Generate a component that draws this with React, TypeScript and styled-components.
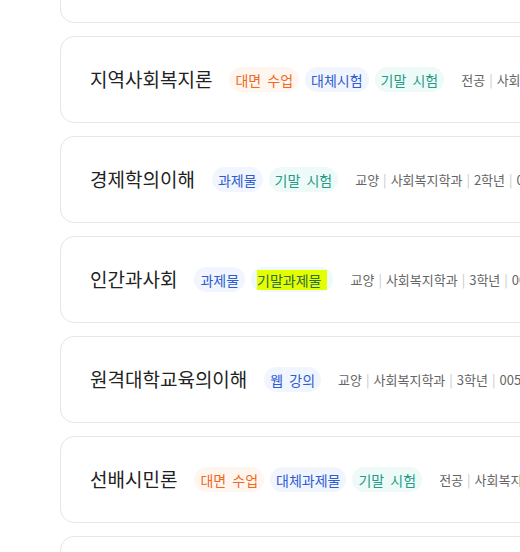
import React from 'react';
import styled, { createGlobalStyle } from 'styled-components';

type TagKind = 'orange' | 'blue' | 'teal';

interface Course {
  title: string;
  tags: { label: string; kind: TagKind; marked?: boolean }[];
  meta: string[];
}

const courses: Course[] = [
  {
    title: '사회복지개론',
    tags: [{ label: '과제물', kind: 'blue' }],
    meta: ['전공', '사회복지학과', '1학년', '003'],
  },
  {
    title: '지역사회복지론',
    tags: [
      { label: '대면 수업', kind: 'orange' },
      { label: '대체시험', kind: 'blue' },
      { label: '기말 시험', kind: 'teal' },
    ],
    meta: ['전공', '사회복지학과', '3학년', '003'],
  },
  {
    title: '경제학의이해',
    tags: [
      { label: '과제물', kind: 'blue' },
      { label: '기말 시험', kind: 'teal' },
    ],
    meta: ['교양', '사회복지학과', '2학년', '003'],
  },
  {
    title: '인간과사회',
    tags: [
      { label: '과제물', kind: 'blue' },
      { label: '기말과제물', kind: 'teal', marked: true },
    ],
    meta: ['교양', '사회복지학과', '3학년', '003'],
  },
  {
    title: '원격대학교육의이해',
    tags: [{ label: '웹 강의', kind: 'blue' }],
    meta: ['교양', '사회복지학과', '3학년', '005'],
  },
  {
    title: '선배시민론',
    tags: [
      { label: '대면 수업', kind: 'orange' },
      { label: '대체과제물', kind: 'blue' },
      { label: '기말 시험', kind: 'teal' },
    ],
    meta: ['전공', '사회복지학과', '4학년', '003'],
  },
  {
    title: '사회복지행정론',
    tags: [{ label: '과제물', kind: 'blue' }],
    meta: ['전공', '사회복지학과', '4학년', '003'],
  },
];

const tagColors: Record<TagKind, { fg: string; bg: string }> = {
  orange: { fg: '#f0691e', bg: '#fff6f0' },
  blue: { fg: '#2f5bd3', bg: '#f1f6fe' },
  teal: { fg: '#249a87', bg: '#eefaf8' },
};

const App: React.FC = () => {
  return (
    <>
      <GlobalStyle />
      <List>
        {courses.map((c) => (
          <Card key={c.title}>
            <Title>{c.title}</Title>
            <Tags>
              {c.tags.map((t) => (
                <Tag key={t.label} $kind={t.kind}>
                  {t.marked ? <Mark>{t.label}</Mark> : t.label}
                </Tag>
              ))}
            </Tags>
            <Meta>
              {c.meta.map((m, i) => (
                <React.Fragment key={m + i}>
                  {i > 0 && <Sep>|</Sep>}
                  {m}
                </React.Fragment>
              ))}
              <Sep>|</Sep>3학점
            </Meta>
          </Card>
        ))}
      </List>
    </>
  );
};

const GlobalStyle = createGlobalStyle`
  html, body {
    margin: 0;
    background: #fff;
    overflow: hidden;
  }
  body {
    font-family: "Noto Sans CJK KR", "Noto Sans", sans-serif;
  }
`;

const List = styled.div`
  display: flex;
  flex-direction: column;
  gap: 13px;
  margin-top: -64px;
  padding-left: 60px;
`;

const Card = styled.div`
  box-sizing: border-box;
  height: 87px;
  width: 760px;
  flex-shrink: 0;
  display: flex;
  align-items: center;
  padding-left: 29px;
  border: 1px solid #e6e6e6;
  border-radius: 14px;
  background: #fff;
  white-space: nowrap;
`;

const Title = styled.div`
  font-size: 19px;
  color: #222;
  margin-right: 17px;
  margin-top: -2px;
`;

const Tags = styled.div`
  display: flex;
  gap: 6px;
  margin-right: 17px;
`;

const Tag = styled.span<{ $kind: TagKind }>`
  display: inline-flex;
  align-items: center;
  height: 25px;
  padding: 0 6px;
  border-radius: 13px;
  font-size: 14px;
  word-spacing: 3px;
  color: ${(p) => tagColors[p.$kind].fg};
  background: ${(p) => tagColors[p.$kind].bg};
`;

const Mark = styled.span`
  background: #e4ff00;
  color: #2b6b45;
  padding-right: 6px;
`;

const Meta = styled.div`
  font-size: 13px;
  color: #666;
`;

const Sep = styled.span`
  color: #c8c8c8;
  margin: 0 4px;
`;

export default App;
